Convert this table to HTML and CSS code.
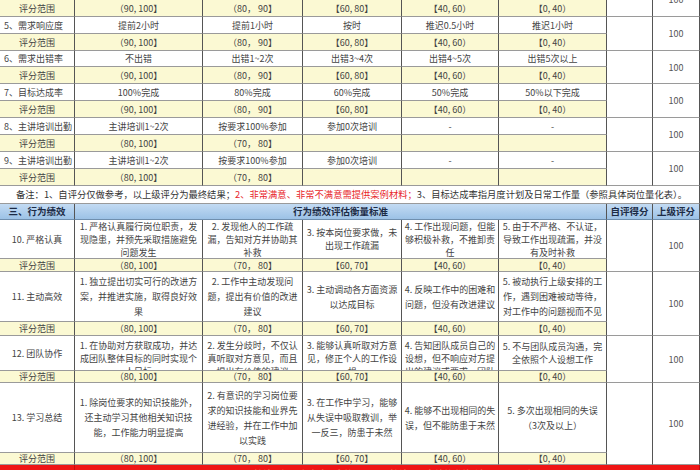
FILE: index.html
```html
<!DOCTYPE html>
<html lang="zh">
<head>
<meta charset="utf-8">
<title>绩效考核表</title>
<link rel="stylesheet" href="styles.css">
</head>
<body>
<div class="viewport">
  <div class="sheet">
    <!-- row 4 (scrolled above view) -->
    <div class="c lab">4、需求完成率</div>
    <div class="c">全部完成</div>
    <div class="c">完成90%</div>
    <div class="c">完成80%</div>
    <div class="c">完成70%</div>
    <div class="c">完成60%以下</div>
    <div class="c sp2"></div>
    <div class="c sp2 score">100</div>
    <div class="c y">评分范围</div>
    <div class="c y">（90, 100】</div>
    <div class="c y">（80， 90】</div>
    <div class="c y">【60, 80】</div>
    <div class="c y">【40, 60）</div>
    <div class="c y">【0, 40）</div>

    <div class="c lab">5、需求响应度</div>
    <div class="c">提前2小时</div>
    <div class="c">提前1小时</div>
    <div class="c">按时</div>
    <div class="c">推迟0.5小时</div>
    <div class="c">推迟1小时</div>
    <div class="c sp2"></div>
    <div class="c sp2 score">100</div>
    <div class="c y">评分范围</div>
    <div class="c y">（90, 100】</div>
    <div class="c y">（80， 90】</div>
    <div class="c y">【60, 80】</div>
    <div class="c y">【40, 60）</div>
    <div class="c y">【0, 40）</div>

    <div class="c lab">6、需求出错率</div>
    <div class="c">不出错</div>
    <div class="c">出错1~2次</div>
    <div class="c">出错3~4次</div>
    <div class="c">出错4~5次</div>
    <div class="c">出错5次以上</div>
    <div class="c sp2"></div>
    <div class="c sp2 score">100</div>
    <div class="c y">评分范围</div>
    <div class="c y">（90, 100】</div>
    <div class="c y">（80， 90】</div>
    <div class="c y">【60, 80】</div>
    <div class="c y">【40, 60）</div>
    <div class="c y">【0, 40）</div>

    <div class="c lab">7、目标达成率</div>
    <div class="c">100%完成</div>
    <div class="c">80%完成</div>
    <div class="c">60%完成</div>
    <div class="c">50%完成</div>
    <div class="c">50%以下完成</div>
    <div class="c sp2"></div>
    <div class="c sp2 score">100</div>
    <div class="c y">评分范围</div>
    <div class="c y">（90, 100】</div>
    <div class="c y">（80， 90】</div>
    <div class="c y">【60, 80】</div>
    <div class="c y">【40, 60）</div>
    <div class="c y">【0, 40）</div>

    <div class="c lab">8、主讲培训出勤</div>
    <div class="c">主讲培训1~2次</div>
    <div class="c">按要求100%参加</div>
    <div class="c">参加0次培训</div>
    <div class="c">-</div>
    <div class="c">-</div>
    <div class="c sp2"></div>
    <div class="c sp2 score">100</div>
    <div class="c y">评分范围</div>
    <div class="c y">（80, 100】</div>
    <div class="c y">（70， 80】</div>
    <div class="c y"></div>
    <div class="c y"></div>
    <div class="c y"></div>

    <div class="c lab">9、主讲培训出勤</div>
    <div class="c">主讲培训1~2次</div>
    <div class="c">按要求100%参加</div>
    <div class="c">参加0次培训</div>
    <div class="c">-</div>
    <div class="c">-</div>
    <div class="c sp2"></div>
    <div class="c sp2 score">100</div>
    <div class="c y">评分范围</div>
    <div class="c y">（80, 100】</div>
    <div class="c y">（70， 80】</div>
    <div class="c y"></div>
    <div class="c y"></div>
    <div class="c y"></div>

    <div class="c note">备注：1、自评分仅做参考，以上级评分为最终结果；<span class="red">2、非常满意、非常不满意需提供案例材料；</span>3、目标达成率指月度计划及日常工作量（参照具体岗位量化表）。</div>

    <div class="c hd">三、行为绩效</div>
    <div class="c hd wide">行为绩效评估衡量标准</div>
    <div class="c hd">自评得分</div>
    <div class="c hd">上级评分</div>

    <div class="c">10. 严格认真</div>
    <div class="c">1. 严格认真履行岗位职责，发现隐患，并预先采取措施避免问题发生</div>
    <div class="c">2. 发现他人的工作疏漏，告知对方并协助其补救</div>
    <div class="c">3. 按本岗位要求做，未出现工作疏漏</div>
    <div class="c">4. 工作出现问题，但能够积极补救，不推卸责任</div>
    <div class="c">5. 由于不严格、不认证，导致工作出现疏漏，并没有及时补救</div>
    <div class="c sp2"></div>
    <div class="c sp2 score">100</div>
    <div class="c y">评分范围</div>
    <div class="c y">（80, 100】</div>
    <div class="c y">（70， 80】</div>
    <div class="c y">【60, 70】</div>
    <div class="c y">【40, 60）</div>
    <div class="c y">【0, 40）</div>

    <div class="c">11. 主动高效</div>
    <div class="c l15">1. 独立提出切实可行的改进方案，并推进实施，取得良好效果</div>
    <div class="c l15">2. 工作中主动发现问题，提出有价值的改进建议</div>
    <div class="c l15">3. 主动调动各方面资源以达成目标</div>
    <div class="c l15">4. 反映工作中的困难和问题，但没有改进建议</div>
    <div class="c l15">5. 被动执行上级安排的工作，遇到困难被动等待，对工作中的问题视而不见</div>
    <div class="c sp2"></div>
    <div class="c sp2 score">100</div>
    <div class="c y">评分范围</div>
    <div class="c y">（80, 100】</div>
    <div class="c y">（70， 80】</div>
    <div class="c y">【60, 70】</div>
    <div class="c y">【40, 60）</div>
    <div class="c y">【0, 40）</div>

    <div class="c">12. 团队协作</div>
    <div class="c top">1. 在协助对方获取成功，并达成团队整体目标的同时实现个人目标</div>
    <div class="c top">2. 发生分歧时，不仅认真听取对方意见，而且提出有价值的建议</div>
    <div class="c top">3. 能够认真听取对方意见，修正个人的工作设想</div>
    <div class="c top">4. 告知团队成员自己的设想，但不响应对方提出的建议或要求，团队</div>
    <div class="c">5. 不与团队成员沟通，完全依照个人设想工作</div>
    <div class="c sp2"></div>
    <div class="c sp2 score">100</div>
    <div class="c y">评分范围</div>
    <div class="c y">（80, 100】</div>
    <div class="c y">（70， 80】</div>
    <div class="c y">【60, 70】</div>
    <div class="c y">【40, 60）</div>
    <div class="c y">【0, 40）</div>

    <div class="c">13. 学习总结</div>
    <div class="c l15">1. 除岗位要求的知识技能外，还主动学习其他相关知识技能，工作能力明显提高</div>
    <div class="c l15">2. 有意识的学习岗位要求的知识技能和业界先进经验，并在工作中加以实践</div>
    <div class="c l15">3. 在工作中学习，能够从失误中吸取教训，举一反三，防患于未然</div>
    <div class="c l15">4. 能够不出现相同的失误，但不能防患于未然</div>
    <div class="c l15">5. 多次出现相同的失误（3次及以上）</div>
    <div class="c sp2"></div>
    <div class="c sp2 score">100</div>
    <div class="c y">评分范围</div>
    <div class="c y">（80, 100】</div>
    <div class="c y">（70， 80】</div>
    <div class="c y">【60, 70】</div>
    <div class="c y">【40, 60）</div>
    <div class="c y">【0, 40）</div>

    <div class="c rd"></div>
    <div class="c rd rdwide">（1）考核结果经双方确认后生效；（2）考核结果作为绩效发放依据；（3）如有异议</div>
  </div>
</div>
</body>
</html>
```
FILE: styles.css
```css
html, body {
  margin: 0;
  padding: 0;
  background: #fff;
}

.viewport {
  width: 700px;
  height: 470px;
  overflow: hidden;
}

.sheet {
  display: grid;
  grid-template-columns: 75px 128px 100px 99px 97px 108px 46px 47px;
  grid-template-rows:
    17px 17px 17px 17px 16px 17px 17px 17px 17px 17px 17px 17px
    18px 16px
    39px 13px 50px 14px 35px 12px 70px 12px 24px;
  margin-top: -17px;
  font-family: "Noto Sans CJK SC", "Noto Sans", sans-serif;
  font-size: 9px;
  color: #444;
}

.c {
  box-sizing: border-box;
  border-right: 1px solid #555;
  border-bottom: 1px solid #9a9a9a;
  display: flex;
  align-items: center;
  justify-content: center;
  text-align: center;
  overflow: hidden;
  line-height: 13px;
  padding: 0 2px;
  background: #fff;
}

.y {
  background: #fbf9d3;
}

.lab {
  justify-content: flex-start;
  padding-left: 4px;
  white-space: nowrap;
}

.sp2 {
  grid-row: span 2;
}

.score {
  color: #555;
  font-size: 9px;
}

.note {
  grid-column: 1 / -1;
  justify-content: flex-start;
  padding-left: 16px;
  white-space: nowrap;
  color: #333;
  font-size: 9.3px;
}

.note .red {
  color: #e8262a;
}

.hd {
  background: linear-gradient(#c3dbf3, #9cc2e6);
  font-weight: bold;
  color: #1c2b45;
  font-size: 9.5px;
  white-space: nowrap;
  padding: 0;
  border-bottom-color: #6f8fae;
}

.wide {
  grid-column: span 5;
}

.l15 {
  line-height: 15px;
}

.top {
  align-items: flex-start;
  padding-top: 3px;
}

.rd {
  background: #ef1515;
  border-right-color: #c40c0c;
  border-bottom: none;
  color: #fff3c0;
  align-items: flex-start;
  padding-top: 3px;
}

.rdwide {
  grid-column: span 7;
  white-space: nowrap;
  font-weight: bold;
}
```
